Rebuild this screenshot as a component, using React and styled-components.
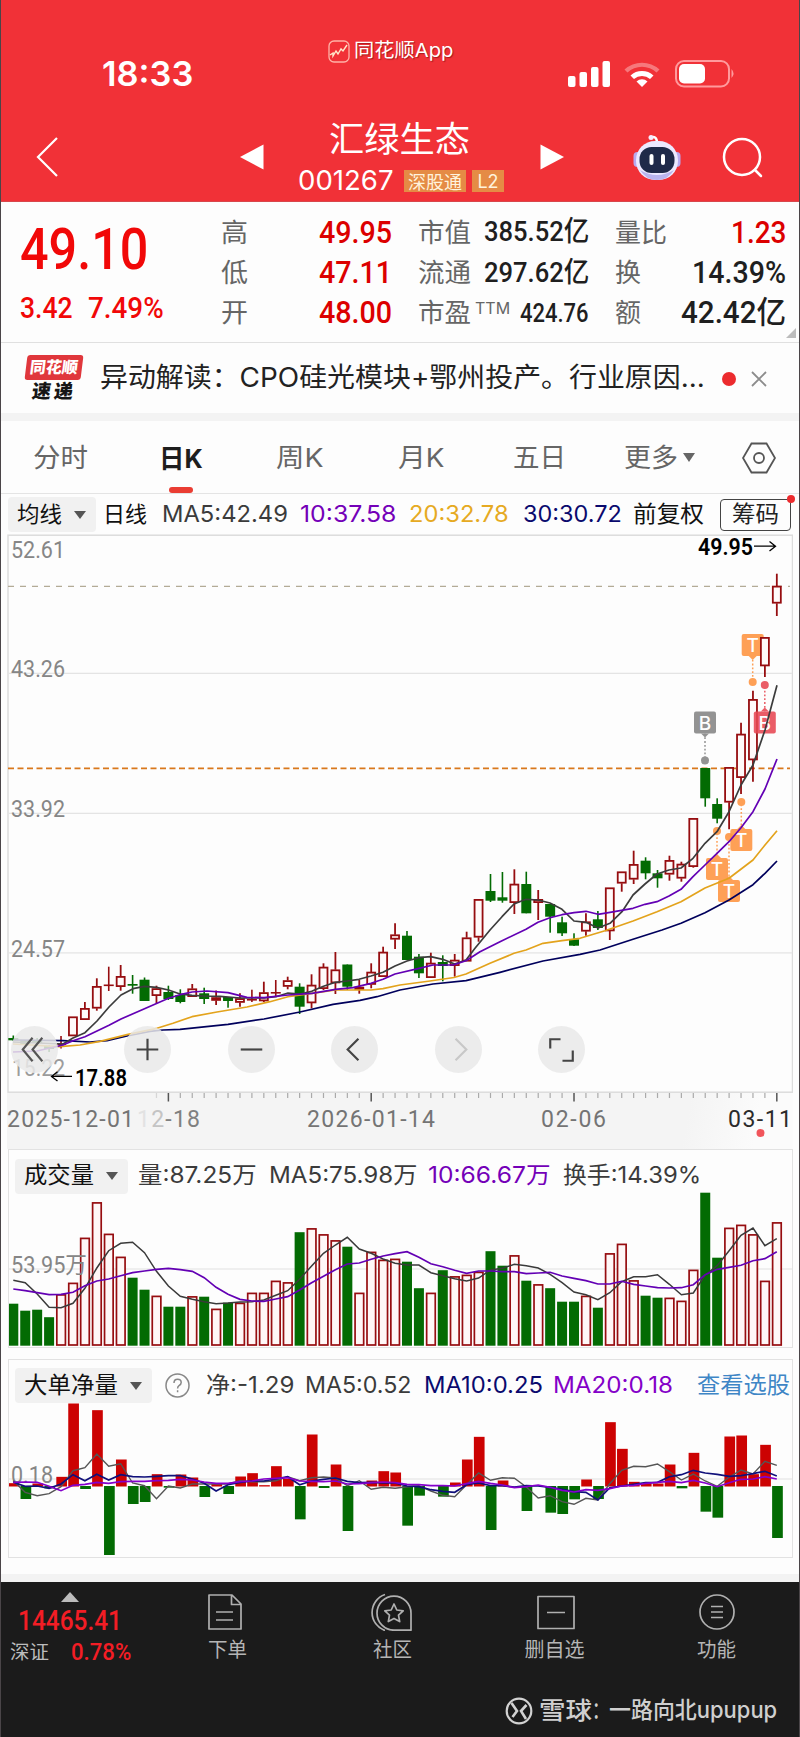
import React, { useLayoutEffect, useRef, useState } from "react";
import styled, { createGlobalStyle, css } from "styled-components";

const UI = '"Inter", "Noto Sans CJK SC", sans-serif';
const NUM = '"Roboto", "Noto Sans CJK SC", sans-serif';
const GREEN = "#036b03";
const RED = "#960d10";

const GlobalStyle = createGlobalStyle`
  * { box-sizing: border-box; }
  body { margin: 0; background: #fdfdfd; font-family: ${UI}; }
`;

/* ---------- text fitted to a fixed width ---------- */

const FitBox = styled.span`
  display: inline-block;
  flex: none;
  width: ${(p) => p.$w}px;
  margin-left: ${(p) => p.$ml || 0}px;
  margin-top: ${(p) => p.$mt || 0}px;
  color: ${(p) => p.$color || "inherit"};
  font-size: ${(p) => (p.$size ? p.$size + "px" : "inherit")};
  font-weight: ${(p) => p.$weight || "inherit"};
  line-height: 1.2;
  white-space: nowrap;
  ${(p) => p.$num && css`font-family: ${NUM};`}
`;
const FitInner = styled.span`
  display: inline-block;
  transform-origin: 0 50%;
`;

function Fit({ w, ml, mt, color, size, weight, num, children }) {
  const ref = useRef(null);
  const [scale, setScale] = useState(1);
  useLayoutEffect(() => {
    const natural = ref.current.offsetWidth;
    if (natural) setScale(w / natural);
  }, [w, children]);
  return (
    <FitBox $w={w} $ml={ml} $mt={mt} $color={color} $size={size} $weight={weight} $num={num}>
      <FitInner ref={ref} style={{ transform: `scaleX(${scale})` }}>{children}</FitInner>
    </FitBox>
  );
}

/* ---------- page parts ---------- */

const Page = styled.main`
  width: 800px;
  height: 1737px;
  border-left: 1px solid #4a4548;
  border-right: 1px solid #4a4548;
  background: #fdfdfd;
  overflow: hidden;
`;
const Row = styled.div`
  display: flex;
  align-items: center;
`;
const Header = styled.header`
  height: 202px;
  background: #f13137;
  border-bottom: 1px solid #d8474c;
  color: #fff;
`;
const StatusBar = styled(Row)`
  height: 104px;
  padding: 44px 0 0 101px;
`;
const AppTag = styled(Row)`
  margin: -46px 0 0 135px;
  text-shadow: 1px 1px 1px rgba(90, 0, 0, 0.5);
`;
const StatusIcons = styled.svg`
  margin: -3px 0 0 113px;
`;
const NavBar = styled(Row)`
  height: 97px;
`;
const TitleBlock = styled.div`
  width: 238px;
  margin-left: 35px;
  padding-top: 12px;
`;
const Code = styled(Row)`
  margin-top: 5px;
`;
const Tag = styled.span`
  display: flex;
  align-items: center;
  justify-content: center;
  height: 22px;
  width: ${(p) => p.$w}px;
  margin-left: ${(p) => p.$ml}px;
  background: #e58b45;
  color: #fff3dc;
  font-size: 18px;
`;
const Icon = styled.svg`
  display: block;
  flex: none;
  margin-left: ${(p) => p.$ml || 0}px;
  margin-top: ${(p) => p.$mt || 0}px;
`;

const Quote = styled.section`
  position: relative;
  display: grid;
  grid-template-columns: 200px 197px 197px 191px;
  height: 141px;
  border-bottom: 1px solid #e0e0e0;
`;
const PriceBlock = styled.div`
  padding: 14px 0 0 19px;
  color: #f10808;
`;
const Change = styled(Row)`
  margin-top: 6px;
`;
const StatColumn = styled.div`
  padding-top: 10px;
`;
const Stat = styled(Row)`
  height: 40.4px;
  padding-left: 20px;
  justify-content: space-between;
`;
const StatValue = styled.div`
  padding-right: ${(p) => p.$pr || 0}px;
`;
const Corner = styled.i`
  position: absolute;
  right: 3px;
  bottom: 4px;
  border: 5px solid transparent;
  border-right-color: #bcbcbc;
  border-bottom-color: #bcbcbc;
`;
const News = styled(Row)`
  height: 70px;
  padding-top: 1px;
`;
const NewsLogo = styled.div`
  width: 56px;
  margin-left: 25px;
`;
const LogoTop = styled.div`
  height: 25px;
  line-height: 24px;
  border-radius: 3px;
  transform: skewX(-7deg);
  background: #e0373c;
  color: #fff;
  font-size: 16px;
  font-weight: 900;
  text-align: center;
`;
const LogoBottom = styled.div`
  height: 22px;
  margin-top: 1px;
  line-height: 21px;
  transform: skewX(-7deg);
  color: #161616;
  font-size: 19px;
  font-weight: 900;
  letter-spacing: 3px;
  text-align: center;
`;
const Dot = styled.i`
  flex: none;
  width: ${(p) => p.$d}px;
  height: ${(p) => p.$d}px;
  margin-left: ${(p) => p.$ml || 0}px;
  border-radius: 50%;
  background: #ec2b2e;
`;
const Strip = styled.div`
  height: 8px;
  background: #f3f3f3;
`;
const Tabs = styled(Row)`
  height: 73px;
  padding-top: 1px;
  border-bottom: 1px solid #e4e4e4;
  color: #666;
`;
const ActiveTab = styled.div`
  display: flex;
  flex-direction: column;
  align-items: center;
  width: 44px;
  margin: 18px 0 0 71px;
  color: #1e1e1e;
  &::after {
    content: "";
    width: 24px;
    height: 6px;
    margin: 13px 0 -3px;
    border-radius: 3px;
    background: #ea3d33;
  }
`;
const Legend = styled(Row)`
  height: ${(p) => p.$h}px;
  margin-bottom: ${(p) => p.$mb || 0}px;
  padding-top: 1px;
  color: #3b3b3b;
  font-size: 23px;
`;
const Picker = styled(Row)`
  flex: none;
  width: ${(p) => p.$w}px;
  height: 35px;
  margin-left: ${(p) => p.$ml}px;
  padding-left: 9px;
  border-radius: 4px;
  background: #f1f1f1;
  color: #111;
`;
const Caret = styled.i`
  margin-left: 12px;
  border: 6px solid transparent;
  border-top: 8px solid #555;
  border-bottom: 0;
`;
const ChipButton = styled(Row)`
  position: relative;
  width: 71px;
  height: 32px;
  margin-left: 16px;
  justify-content: center;
  border: 1px solid #444;
  border-radius: 4px;
  color: #222;
  ${Dot} {
    position: absolute;
    top: -5px;
    right: -5px;
  }
`;
const MainChart = styled.section`
  position: relative;
  width: 786px;
  height: 559px;
  margin-left: 6px;
`;
const ChartSvg = styled.svg`
  display: block;
`;
const Controls = styled.div`
  position: absolute;
  left: 4px;
  bottom: 20px;
  display: flex;
  gap: 56.4px;
`;
const RoundButton = styled.span`
  display: flex;
  width: 47px;
  height: 47px;
  border-radius: 50%;
  background: rgba(233, 233, 233, 0.85);
  &:first-child { margin-right: 10px; }
`;
const Axis = styled.div`
  width: 786px;
  height: 56px;
  margin-left: 6px;
  background: linear-gradient(100deg, #f4f4f4 86%, #fbfbfb 95%);
`;
const Panel = styled.section`
  width: 785px;
  height: 199px;
  margin: 0 0 ${(p) => p.$mb}px 7px;
  border: 1px solid #e2e2e2;
`;
const Footer = styled.footer`
  height: 155px;
  background: #1b1b1b;
  color: #bdbdbd;
`;
const Toolbar = styled.nav`
  display: grid;
  grid-template-columns: 146px 158px 173px 156px 165px;
  height: 88px;
`;
const IndexBlock = styled.div`
  padding-top: 10px;
`;
const IndexRow = styled(Row)`
  margin-top: 1px;
`;
const UpMark = styled.div`
  width: 0;
  margin-left: 60px;
  border: 9px solid transparent;
  border-top: 0;
  border-bottom: 10px solid #bcbcbc;
`;
const Tool = styled.div`
  display: flex;
  flex-direction: column;
  align-items: center;
  gap: 7px;
  padding-top: 11px;
  color: #b5b5b5;
`;
const Credit = styled(Row)`
  height: 52px;
  margin-top: 15px;
  padding-left: 504px;
  color: #cfcfcf;
  font-weight: 500;
`;

/* ---------- data ---------- */

const X0 = 13.3;
const STEP = 11.93;
const cx = (i) => X0 + i * STEP;

// up/down, high, low, body top, body bottom
const candles = [
  ["g", 1035.5, 1041, 1038, 1040.3], ["g", 1040, 1045, 1041, 1044], ["g", 1038, 1044, 1040, 1043], ["g", 1045, 1052, 1046, 1049],
  ["r", 1036, 1048.5, 1043.5, 1045], ["r", 1016.7, 1036, 1016.7, 1036], ["r", 1002, 1019.7, 1008.3, 1019.7], ["r", 978.3, 1010.7, 986.3, 1008.3],
  ["r", 966.7, 991, 984.5, 986], ["r", 965, 990.7, 976.3, 986.7], ["g", 975, 993.7, 984, 985.7], ["g", 977.5, 1001, 979.7, 1001],
  ["r", 985.7, 1003.3, 988.5, 995.7], ["g", 985.7, 1000, 992, 999], ["g", 989.3, 1003.3, 995, 1002], ["r", 984, 996.7, 988.7, 996.7],
  ["g", 987.7, 1004, 993.3, 999], ["r", 990.5, 1005, 997.5, 1000.5], ["g", 997, 1007.7, 997, 1001], ["r", 993.3, 1006.7, 998.5, 1002.5],
  ["r", 989.7, 1002, 999, 1000], ["r", 981.7, 1002, 992.5, 1001], ["r", 980, 997, 992, 993], ["r", 976.7, 989.3, 980.5, 986.5],
  ["g", 983.3, 1014, 986.7, 1006.7], ["r", 974.3, 1008.3, 985, 1003], ["r", 963.3, 990, 967, 988.7], ["r", 952, 994, 969.7, 983],
  ["g", 964.5, 990, 964.5, 986.7], ["r", 980, 993.7, 987, 989.5], ["r", 963.3, 988.3, 972, 984.5], ["r", 946.7, 976.7, 952, 976.7],
  ["r", 923.3, 949, 934.7, 939.3], ["g", 931, 960, 935.7, 960], ["g", 954, 978, 956.7, 973.3], ["r", 952.7, 977.7, 963, 977.7],
  ["g", 955.3, 981.3, 962, 966], ["r", 954, 976.7, 960, 965.7], ["r", 931.7, 961.3, 937.7, 961.3], ["r", 899.3, 941.7, 899.3, 937.3],
  ["g", 874, 902, 891, 900.7], ["g", 872, 902.7, 897.3, 900.7], ["r", 869.3, 914, 884, 902.7], ["g", 871.7, 913.3, 884, 913.3],
  ["r", 890, 920, 899.3, 902.7], ["g", 904, 932.7, 904, 916.7], ["g", 916.7, 936, 922.3, 933.3], ["g", 933.3, 946, 939.3, 945.7],
  ["r", 913.3, 935.7, 921.7, 931.3], ["g", 911, 930, 919.3, 928], ["r", 887.7, 940, 887.7, 931], ["r", 871.7, 891.7, 871.7, 883.3],
  ["r", 850.7, 884, 864.3, 879.3], ["g", 857.3, 879.3, 860.7, 873.3], ["g", 870, 887.7, 873.3, 878.3], ["r", 855.7, 880.7, 860.3, 874.3],
  ["r", 861.7, 881.7, 864, 878.3], ["r", 818.3, 867.7, 818.3, 866.7], ["g", 768, 806.7, 768, 798.3], ["g", 798.3, 823.3, 804, 818.7],
  ["r", 767.3, 829.3, 767.3, 802.3], ["r", 722.7, 794, 734, 777.7], ["r", 690.7, 781.7, 699.3, 760], ["r", 637.3, 677, 637.3, 666],
  ["r", 573.7, 616, 586, 603.3],
];

const priceLines = [
  ["#00005c", "13,1040 63,1040.7 90,1042 107,1040.7 127,1036 150,1031.3 163,1030 180,1029.3 228,1024.3 264,1019 300,1012 333,1004.3 360,1000.3 377,996.7 400,990 433,984 466,980.7 500,972.3 543,961 580,954.3 600,950 633,939.3 662,930 681,923.3 705,912.7 729,900 753,884.7 765,873.3 777,861"],
  ["#e3a31c", "13,1044 60,1046.7 80,1045 100,1041.3 127,1034.7 157,1028.3 173,1023.3 192,1016.7 217,1012 247,1007 270,1001.7 288,996.7 312,993.3 335.5,990 371,990 383,988.7 400,985 430,981 454,977.5 466,974 490,963.3 514,953.3 526,950 543,943.3 562,940.7 580,938.3 605,930.7 633,921 657,911.7 681,901.7 705,888 729,878.3 753,860 765,845 777,830.7"],
  ["#3c3c3c", "13,1042 63,1044 73,1038 85,1032.7 97,1021 109,1007 121,995 133,988.7 144.5,986.3 156.5,987.3 168.5,990 180,994 192,995.3 204,996 220,996.3 240,998 264,998 276,996.7 288,993 300,994 311.7,991.3 323.5,986.3 335.5,982.3 347,981 359,979.3 371,976 383,972.3 395,966 407,961 419,957.7 430.7,956.7 442.7,959.3 454.7,964 466,960 475,948.3 490,930 502,916.7 514,904 526,899.3 538,900 550,903 562,909.3 574,921 586,922.3 598,928 610,923.3 622,911.7 633,895 645,884 657,874 669,870 681,868 693,858.3 705,843.3 717,831.7 729,811.7 741,785 753,765 765,730 777,685.3"],
  ["#6300b4", "13,1052 37,1051 63,1045 73,1040.7 85,1036.7 97,1031 109,1025.3 121,1019 144.5,1008.7 168.5,998.3 180,994.7 192,992 207,991 228,992.7 247,997.3 264,997.7 288,995 312,993.3 335.5,989.3 353,987.7 371,983.3 383,979.3 395,974 419,968.3 433,965 453,965 466,960.7 480,951.7 500,941.7 526,929.3 538,922.3 550,917.7 562,914.7 574,912.7 586,911.3 598,914.3 610,912.3 633,908.3 645,904.3 657,901.7 669,896 681,889.3 693,876.7 705,865 717,853.3 729,841.7 741,827.7 753,811.7 765,789 777,759"],
];

const volume = "42g 35g 36g 28.5g 51.5r 63r 108r 143.5r 112r 89r 68g 56g 50r 39g 39g 49.5r 49g 37r 43g 43r 53r 53r 65r 63.5r 113.5g 117.5r 111.5r 105.5r 99g 53r 94r 86r 87r 84g 57.5g 53r 75.5g 69.5r 71r 74r 94.5g 80g 90.5r 65g 61.5r 57.5g 44g 44g 50r 38g 92.5r 102r 65.5r 50g 48g 48r 45r 76r 153g 88g 118r 121r 111.5r 65r 123.5r".split(" ");
const volMa5 = [421, 428, 462, 502, 503, 490, 445, 384, 332, 310, 307, 338, 394, 438, 469, 478, 485, 491, 489, 486, 485, 480, 466, 452, 418, 378, 340, 315, 292, 327, 340, 357, 370, 375, 375, 398, 407, 416, 423, 414, 390, 385, 373, 377, 384, 403, 428, 456, 464, 479, 458, 425, 410, 410, 404, 433, 464, 459, 405, 377, 332, 286, 264, 317, 296];
const volMa10 = [447, 452, 458, 464, 463, 457, 437, 423, 417, 407, 398, 393, 388, 385, 389, 394, 413, 442, 463, 478, 483, 484, 477, 470, 450, 428, 409, 389, 372, 369, 358, 348, 341, 335, 352, 371, 380, 391, 400, 393, 393, 395, 395, 401, 399, 397, 408, 415, 422, 432, 432, 424, 433, 438, 443, 444, 443, 434, 404, 388, 382, 376, 362, 356, 335];

const net = [401, 450, 402, 418, 382, 162, 420, 182, 618, 330, 465, 459, 374, 416, 375, 384, 444, 403, 435, 381, 371, 407, 350, 388, 511, 255, 417, 345, 546, 411, 393, 365, 369, 530, 440, 411, 443, 399, 330, 262, 543, 393, 411, 486, 411, 491, 495, 451, 390, 450, 218, 298, 397, 401, 402, 345, 418, 310, 488, 506, 261, 258, 374, 286, 567];
const netMa5 = [395, 430, 440, 434, 413, 365, 356, 315, 352, 344, 402, 410, 449, 411, 417, 405, 405, 405, 405, 395, 398, 398, 395, 383, 395, 386, 384, 387, 410, 395, 421, 415, 418, 413, 410, 426, 439, 443, 407, 372, 394, 386, 388, 414, 447, 440, 458, 466, 448, 453, 404, 364, 352, 353, 345, 368, 393, 375, 396, 412, 385, 363, 375, 337, 349];
const netMa10 = [400, 412, 411, 418, 405, 377, 395, 376, 393, 377, 383, 384, 382, 380, 380, 390, 403, 426, 407, 400, 396, 396, 390, 383, 407, 396, 391, 387, 397, 401, 400, 402, 402, 411, 413, 422, 427, 430, 407, 402, 410, 410, 414, 410, 411, 415, 421, 428, 430, 453, 416, 411, 406, 401, 400, 383, 377, 364, 372, 376, 382, 380, 374, 367, 381];
const netMa20 = [400, 399, 400, 412, 425, 409, 406, 400, 403, 398, 397, 397, 395, 394, 391, 393, 399, 403, 403, 398, 396, 390, 388, 386, 396, 397, 398, 396, 405, 404, 401, 399, 401, 406, 407, 410, 410, 411, 404, 397, 403, 408, 416, 413, 408, 415, 424, 429, 422, 424, 419, 411, 409, 403, 400, 397, 401, 394, 402, 413, 401, 391, 390, 383, 390];

const series = (values, base) => values.map((v, i) => `${cx(i).toFixed(1)},${(base + v / 3).toFixed(1)}`).join(" ");

// letter, colour, centre x, box top, dot y
const markers = [
  ["T", "#ff9440", 752.7, 634, 682],
  ["B", "#858585", 705, 711.5, 760.5],
  ["B", "#e84853", 764.8, 711.5, 685],
  ["T", "#ff9440", 741.3, 829, 802],
  ["T", "#ff9440", 717, 858, 831],
  ["T", "#ff9440", 729, 880, 837],
];

const highLow = [["高", "49.95"], ["低", "47.11"], ["开", "48.00"]];
const marketCap = [["市值", "385.52亿", 105, 28], ["流通", "297.62亿", 105, 28], ["市盈", "424.76", 69, 25.5, "TTM"]];
const turnover = [["量比", "1.23", 55, 52, "#dc0000"], ["换", "14.39%", 94, 26, "#1f1f1f"], ["额", "42.42亿", 105, 26, "#1f1f1f"]];

/* ---------- chart pieces ---------- */

const ChartLabel = ({ x, y, w, size = 23, color = "#868686", weight = 400, adjust = "spacingAndGlyphs", children }) => (
  <text x={x} y={y} textLength={w} lengthAdjust={adjust} fontFamily={NUM} fontSize={size} fontWeight={weight} fill={color}>
    {children}
  </text>
);

function Candle({ i, d }) {
  const [kind, hi, lo, top, bottom] = d;
  const x = cx(i);
  const h = bottom - top;
  const color = kind === "g" ? GREEN : RED;
  if (kind === "g" || h < 2.5)
    return (
      <g fill={color}>
        <rect x={x - 0.8} y={hi} width="1.6" height={lo - hi} />
        <rect x={x - 5} y={top} width="10" height={Math.max(h, 1.6)} />
      </g>
    );
  return (
    <g stroke={color} strokeWidth="1.8" fill="none">
      {hi < top && <path d={`M${x} ${hi}V${top}`} />}
      {lo > bottom && <path d={`M${x} ${bottom}V${lo}`} />}
      <rect x={x - 4} y={top + 0.6} width="8" height={h - 1.2} fill="#fffafa" />
    </g>
  );
}

function Marker({ d }) {
  const [letter, color, x, top, dot] = d;
  const above = dot > top;
  const edge = above ? top + 22 : top;
  return (
    <g opacity="0.88">
      <path d={`M${x} ${edge}V${dot}`} stroke={color} strokeWidth="1.5" strokeDasharray="1.8 2" />
      <rect x={x - 11} y={top} width="22" height="22" rx="2" fill={color} />
      <path d={above ? `M${x - 4} ${edge}h8l-4 4z` : `M${x - 4} ${edge}h8l-4 -4z`} fill={color} />
      <circle cx={x} cy={dot} r="4" fill={color} />
      <text x={x} y={top + 18} textAnchor="middle" fontFamily={UI} fontSize="19" fontWeight="500" fill="#fff">{letter}</text>
    </g>
  );
}

function PriceChart() {
  return (
    <ChartSvg width="786" height="559" viewBox="7 534 786 559">
      <rect x="8" y="535.2" width="784.5" height="557" fill="none" stroke="#dcdcdc" strokeWidth="1.5" />
      {[673.3, 813.3, 952.9].map((y) => <path key={y} d={`M8 ${y}H792`} stroke="#e4e4e4" strokeWidth="1.3" />)}
      <path d="M8 586.4H790" stroke="#b3ab96" strokeWidth="1.1" strokeDasharray="6 6" />
      <path d="M8 768.4H790" stroke="#d9781c" strokeWidth="1.8" strokeDasharray="6 3.5" />
      <ChartLabel x="11" y="557.5" w="54">52.61</ChartLabel>
      <ChartLabel x="11" y="677" w="54">43.26</ChartLabel>
      <ChartLabel x="11" y="817" w="54">33.92</ChartLabel>
      <ChartLabel x="11" y="956.5" w="54">24.57</ChartLabel>
      <ChartLabel x="12" y="1076" w="53" color="#9c9c9c">15.22</ChartLabel>
      <Marker d={markers[0]} />
      <Marker d={markers[3]} />
      <Marker d={markers[4]} />
      {candles.map((d, i) => <Candle key={i} i={i} d={d} />)}
      <Marker d={markers[1]} />
      <Marker d={markers[2]} />
      <Marker d={markers[5]} />
      {priceLines.map(([color, points]) => (
        <polyline key={color} points={points} fill="none" stroke={color} strokeWidth="1.7" strokeLinejoin="round" />
      ))}
      <ChartLabel x="698" y="555" w="55" color="#000" weight="600">49.95</ChartLabel>
      <path d="M754 546.2h21M769.5 541.5l6 4.7l-6 4.7" fill="none" stroke="#000" strokeWidth="1.3" />
      <ChartLabel x="75" y="1085.5" w="52" color="#000" weight="600">17.88</ChartLabel>
      <path d="M72 1076.4h-20M57.5 1071.7l-6 4.7l6 4.7" fill="none" stroke="#000" strokeWidth="1.3" />
    </ChartSvg>
  );
}

const controlIcons = [
  ["M22 12L12 24l10 12M32 12L22 24l10 12", "#555"],
  ["M24 13v22M13 24h22", "#444"],
  ["M13 24h22", "#444"],
  ["M28 13L17 24l11 11", "#444"],
  ["M21 13l11 11l-11 11", "#c8c8c8"],
  ["M12.5 23V13.5H23M35.5 25V35.5H25", "#444"],
];

function TimeAxis() {
  return (
    <Axis>
      <ChartSvg width="786" height="56" viewBox="7 1093 786 56">
        {candles.map((_, i) => {
          if (i < 12) return null;
          const major = [13, 30, 47, 64].includes(i);
          return <path key={i} d={`M${cx(i)} 1093v${major ? 8.5 : 5}`} stroke={major ? "#555" : "#aaa"} strokeWidth={major ? 1.5 : 1.2} opacity={i === 12 ? 0.4 : 1} />;
        })}
        <ChartLabel x="7" y="1127" w="127" adjust="spacing" color="#747474">2025-12-01</ChartLabel>
        <ChartLabel x="137" y="1127" w="63" adjust="spacing" color="#808080">
          <tspan fill="#e2e2e2">1</tspan><tspan fill="#c4c4c4">2</tspan>-18
        </ChartLabel>
        <ChartLabel x="307" y="1127" w="128" adjust="spacing" color="#747474">2026-01-14</ChartLabel>
        <ChartLabel x="541" y="1127" w="65" adjust="spacing" color="#747474">02-06</ChartLabel>
        <ChartLabel x="728" y="1127" w="64" adjust="spacing" color="#2b2b2b">03-11</ChartLabel>
        <circle cx="760.5" cy="1133" r="4" fill="#f1555b" />
      </ChartSvg>
    </Axis>
  );
}

function VolumeChart() {
  return (
    <ChartSvg width="783" height="160" viewBox="9 1187 783 160">
      <path d="M9 1269H792" stroke="#e2e2e2" strokeWidth="1.2" />
      {volume.map((v, i) => {
        const h = parseFloat(v);
        const y = 1345.7 - h;
        return v.endsWith("g")
          ? <rect key={i} x={cx(i) - 5} y={y} width="10" height={h} fill={GREEN} />
          : <rect key={i} x={cx(i) - 4.2} y={y + 0.7} width="8.6" height={h - 1.4} fill="#fff7f7" stroke={RED} strokeWidth="1.7" />;
      })}
      <ChartLabel x="11" y="1272.5" w="76">53.95万</ChartLabel>
      <polyline points={series(volMa5, 1140)} fill="none" stroke="#3a3a3a" strokeWidth="1.5" />
      <polyline points={series(volMa10, 1140)} fill="none" stroke="#6300b4" strokeWidth="1.7" />
    </ChartSvg>
  );
}

function NetChart() {
  return (
    <ChartSvg width="783" height="156" viewBox="9 1403 783 156">
      <path d="M9 1480H792" stroke="#e2e2e2" strokeWidth="1.2" />
      {net.map((v, i) => {
        const up = v < 411;
        const h = Math.abs(v - 411) / 3;
        return h > 0 && <rect key={i} x={cx(i) - 4.7} y={up ? 1487.5 - h : 1487} width="10.7" height={Math.max(h, 1)} fill={up ? "#cc0202" : GREEN} />;
      })}
      <ChartLabel x="11" y="1484" w="42">0.18</ChartLabel>
      <polyline points={series(netMa5, 1350)} fill="none" stroke="#555" strokeWidth="1.4" />
      <polyline points={series(netMa10, 1350)} fill="none" stroke="#10107a" strokeWidth="1.7" />
      <polyline points={series(netMa20, 1350)} fill="none" stroke="#8400cc" strokeWidth="1.7" />
    </ChartSvg>
  );
}

/* ---------- icons ---------- */

const Robot = () => (
  <Icon width="50" height="50" viewBox="0 0 50 50" $ml={68} $mt={9}>
    <path d="M25 11c0-6-3-7-7-5" fill="none" stroke="#fff" strokeWidth="2.5" />
    <circle cx="19" cy="5.5" r="2.5" fill="#f5ecff" />
    <rect x="1.5" y="20" width="8" height="15" rx="4" fill="#b8a9ef" />
    <rect x="40.500" y="20" width="8" height="15" rx="4" fill="#b8a9ef" />
    <rect x="4" y="9" width="42" height="39" rx="19" fill="#ece9ff" />
    <path d="M8 38q17 10 34 0q-6 10-17 10t-17-10z" fill="#b9b4ee" />
    <rect x="7.5" y="15" width="35" height="26" rx="12" fill="#1f2a49" />
    <rect x="17.5" y="22" width="4" height="11" rx="2" fill="#fff" />
    <rect x="29" y="22" width="4" height="11" rx="2" fill="#fff" />
  </Icon>
);

const toolIcon = {
  order: <path d="M2 2h23l9 9v25H2zM24.5 2v9.5H34M9 19h17M9 27h17" />,
  community: (
    <g>
      <path d="M23 37.2A17 17 0 1 1 40 20.200V37.200z" />
      <path d="M14 1.5a19 19 0 0 0 0 36" />
      <path d="M23 11l2.800 6l6.400.8l-4.700 4.400l1.200 6.400l-5.700-3.200l-5.700 3.200l1.200-6.400l-4.700-4.400l6.400-.8z" />
    </g>
  ),
  remove: <path d="M1 3.5h36v32H1zM10 19.5h18" />,
  menu: <g><circle cx="19" cy="19" r="17" /><path d="M13 13.5h12M13 19h12M13 24.5h12" /></g>,
};
const ToolIcon = ({ name, w = 38 }) => (
  <svg width={w} height="38" viewBox={`0 0 ${w} 38`} fill="none" stroke="#b0b0b0" strokeWidth="1.7" strokeLinejoin="round">{toolIcon[name]}</svg>
);

/* ---------- app ---------- */

export default function App() {
  return (
    <Page>
      <GlobalStyle />
      <Header>
        <StatusBar>
          <Fit w={91} size={34} weight={600}>18:33</Fit>
          <AppTag>
            <Icon width="22" height="23" viewBox="0 0 22 23">
              <rect x="1" y="1" width="20" height="21" rx="5" fill="none" stroke="#ffb3a8" strokeWidth="1.3" />
              <path d="M2 15l3-2v3l3-5l2 3l3-5l2 2l4-6" fill="none" stroke="#ffe9cc" strokeWidth="1.4" />
            </Icon>
            <Fit w={99} ml={4} size={19}>同花顺App</Fit>
          </AppTag>
          <StatusIcons width="170" height="30" viewBox="566 57 170 30">
            <g fill="#fff">
              <rect x="568" y="75" width="7.5" height="11" rx="2" />
              <rect x="579.5" y="71" width="7.5" height="15" rx="2" />
              <rect x="591" y="66" width="7.5" height="20" rx="2" />
              <rect x="602.5" y="60" width="7.5" height="26" rx="2" />
              <path d="M642 86l-5.500-5.500a8 8 0 0 1 11 0z" />
              <path d="M630.5 74.500a17 17 0 0 1 23 0l-3.500 3.500a12 12 0 0 0-16 0z" />
              <path d="M624.5 68.500a26 26 0 0 1 35 0l-3 3a21 21 0 0 0-29 0z" opacity="0.35" />
              <rect x="679" y="63" width="26" height="19.5" rx="5" />
            </g>
            <rect x="676" y="60" width="53" height="25.5" rx="8" fill="none" stroke="#ff9a9d" strokeWidth="2" />
            <path d="M731.5 68q4 4.500 0 9z" fill="#ff9a9d" />
          </StatusIcons>
        </StatusBar>
        <NavBar>
          <Icon width="24" height="42" viewBox="0 0 24 42" $ml={34} $mt={9}>
            <path d="M22 2L3 21l19 19" fill="none" stroke="#fff" strokeWidth="2.2" />
          </Icon>
          <Icon width="24" height="26" viewBox="0 0 24 26" $ml={181} $mt={9}>
            <path d="M0 13L23.5 0.500v25z" fill="#fff" />
          </Icon>
          <TitleBlock>
            <Fit w={141} ml={30} size={35} mt={-1}>汇绿生态</Fit>
            <Code>
              <Fit w={96} ml={-1} size={27}>001267</Fit>
              <Tag $w={62} $ml={10}>深股通</Tag>
              <Tag $w={32} $ml={6}>L2</Tag>
            </Code>
          </TitleBlock>
          <Icon width="24" height="26" viewBox="0 0 24 26" $ml={3} $mt={9}>
            <path d="M24 13L0.500 0.500v25z" fill="#fff" />
          </Icon>
          <Robot />
          <Icon width="42" height="42" viewBox="0 0 42 42" $ml={40} $mt={11}>
            <circle cx="20" cy="20" r="18" fill="none" stroke="#fff" strokeWidth="2.5" />
            <path d="M33 33l6 6" stroke="#fff" strokeWidth="2.5" strokeLinecap="round" />
          </Icon>
        </NavBar>
      </Header>

      <Quote>
        <PriceBlock>
          <Fit w={128} size={57} weight={500} num>49.10</Fit>
          <Change>
            <Fit w={53} size={30} weight={500} num>3.42</Fit>
            <Fit w={76} ml={15} size={30} weight={500} num>7.49%</Fit>
          </Change>
        </PriceBlock>
        <StatColumn>
          {highLow.map(([k, v]) => (
            <Stat key={k}>
              <Fit w={27} size={26} color="#666">{k}</Fit>
              <StatValue $pr={6}><Fit w={73} size={31} weight={500} color="#dc0000" num>{v}</Fit></StatValue>
            </Stat>
          ))}
        </StatColumn>
        <StatColumn>
          {marketCap.map(([k, v, w, size, note]) => (
            <Stat key={k}>
              <Fit w={53} size={26} color="#666">{k}</Fit>
              {note && <Fit w={35} ml={-6} mt={-8} size={16} color="#666">{note}</Fit>}
              <StatValue $pr={6}><Fit w={w} size={size} weight={500} color="#1f1f1f" num>{v}</Fit></StatValue>
            </Stat>
          ))}
        </StatColumn>
        <StatColumn>
          {turnover.map(([k, v, w, kw, color]) => (
            <Stat key={k}>
              <Fit w={kw} size={26} color="#666">{k}</Fit>
              <StatValue><Fit w={w} size={31} weight={500} color={color} num>{v}</Fit></StatValue>
            </Stat>
          ))}
        </StatColumn>
        <Corner />
      </Quote>

      <News>
        <NewsLogo>
          <LogoTop>同花顺</LogoTop>
          <LogoBottom>速递</LogoBottom>
        </NewsLogo>
        <Fit w={605} ml={18} size={27} color="#222">异动解读：CPO硅光模块+鄂州投产。行业原因...</Fit>
        <Dot $d={14} $ml={17} />
        <Icon width="16" height="16" viewBox="0 0 16 16" $ml={15}>
          <path d="M1 1l14 14M15 1L1 15" stroke="#8c8c8c" strokeWidth="1.8" />
        </Icon>
      </News>
      <Strip />

      <Tabs>
        <Fit w={55} ml={32} size={26}>分时</Fit>
        <ActiveTab><Fit w={44} size={26} weight={700}>日K</Fit></ActiveTab>
        <Fit w={47} ml={73} size={26}>周K</Fit>
        <Fit w={46} ml={75} size={26}>月K</Fit>
        <Fit w={53} ml={69} size={26}>五日</Fit>
        <Fit w={54} ml={58} size={26}>更多</Fit>
        <Icon width="12" height="9" viewBox="0 0 12 9" $ml={5}><path d="M0 0h12L6 9z" fill="#666" /></Icon>
        <Icon width="34" height="32" viewBox="0 0 34 32" $ml={47}>
          <path d="M9.5 1.5h15L33 16l-8.500 14.500h-15L1 16z" fill="none" stroke="#555" strokeWidth="1.8" />
          <circle cx="17" cy="16" r="5" fill="none" stroke="#555" strokeWidth="1.8" />
        </Icon>
      </Tabs>

      <Legend $h={40}>
        <Picker $w={88} $ml={7}><Fit w={45} size={22}>均线</Fit><Caret /></Picker>
        <Fit w={44} ml={7} size={22} color="#111">日线</Fit>
        <Fit w={126} ml={15}>MA5:42.49</Fit>
        <Fit w={96} ml={12} color="#7400b8">10:37.58</Fit>
        <Fit w={100} ml={13} color="#e6aa22">20:32.78</Fit>
        <Fit w={99} ml={14} color="#0a0a6e">30:30.72</Fit>
        <Fit w={71} ml={11} size={23} color="#111">前复权</Fit>
        <ChipButton><Fit w={47} size={23}>筹码</Fit><Dot $d={8} /></ChipButton>
      </Legend>

      <MainChart>
        <PriceChart />
        <Controls>
          {controlIcons.map(([d, color]) => (
            <RoundButton key={d}>
              <svg width="47" height="47" viewBox="0 0 48 48" fill="none" stroke={color} strokeWidth="2.2"><path d={d} /></svg>
            </RoundButton>
          ))}
        </Controls>
      </MainChart>
      <TimeAxis />

      <Panel $mb={11}>
        <Legend $h={51} $mb={-14}>
          <Picker $w={113} $ml={6}><Fit w={70} size={23}>成交量</Fit><Caret /></Picker>
          <Fit w={119} ml={10}>量:87.25万</Fit>
          <Fit w={148} ml={12}>MA5:75.98万</Fit>
          <Fit w={123} ml={11} color="#7400b8">10:66.67万</Fit>
          <Fit w={138} ml={12}>换手:14.39%</Fit>
        </Legend>
        <VolumeChart />
      </Panel>
      <Panel $mb={16}>
        <Legend $h={50} $mb={-8}>
          <Picker $w={137} $ml={6}><Fit w={94} size={23}>大单净量</Fit><Caret /></Picker>
          <Icon width="25" height="25" viewBox="0 0 25 25" $ml={13}>
            <circle cx="12.5" cy="12.5" r="11.5" fill="none" stroke="#888" strokeWidth="1.5" />
            <path d="M9 10q0-3.700 3.600-3.700t3.600 3.200q0 1.800-2.200 3.200q-1.400 1-1.400 2.800M12.600 17.300v2" fill="none" stroke="#888" strokeWidth="1.5" />
          </Icon>
          <Fit w={88} ml={16}>净:-1.29</Fit>
          <Fit w={107} ml={11}>MA5:0.52</Fit>
          <Fit w={119} ml={12} color="#0a0a6e">MA10:0.25</Fit>
          <Fit w={120} ml={10} color="#8400c8">MA20:0.18</Fit>
          <Fit w={93} ml={24} color="#3f86c6">查看选股</Fit>
        </Legend>
        <NetChart />
      </Panel>
      <Strip />

      <Footer>
        <Toolbar>
          <IndexBlock>
            <UpMark />
            <Fit w={104} ml={17} mt={3} size={27} weight={500} color="#f31d25" num>14465.41</Fit>
            <IndexRow>
              <Fit w={39} ml={9} mt={1} size={19}>深证</Fit>
              <Fit w={60} ml={22} size={24} weight={500} color="#f31d25" num>0.78%</Fit>
            </IndexRow>
          </IndexBlock>
          <Tool><ToolIcon name="order" /><Fit w={39} ml={3} size={20}>下单</Fit></Tool>
          <Tool><ToolIcon name="community" w={42} /><Fit w={39} ml={2} size={20}>社区</Fit></Tool>
          <Tool><ToolIcon name="remove" /><Fit w={60} ml={-3} size={20}>删自选</Fit></Tool>
          <Tool><ToolIcon name="menu" /><Fit w={39} size={20}>功能</Fit></Tool>
        </Toolbar>
        <Credit>
          <svg width="28" height="28" viewBox="0 0 28 28" fill="none" stroke="#d2d2d2">
            <circle cx="14" cy="14" r="12.3" strokeWidth="2.2" />
            <path d="M6.5 6l5.500 8l-4.500 6M21.5 8l-5.500 6l5 8" strokeWidth="2.6" />
          </svg>
          <Fit w={53} ml={6} size={24}>雪球</Fit>
          <Fit w={17} size={23}>：</Fit>
          <Fit w={168} size={23}>一路向北upupup</Fit>
        </Credit>
      </Footer>
    </Page>
  );
}
